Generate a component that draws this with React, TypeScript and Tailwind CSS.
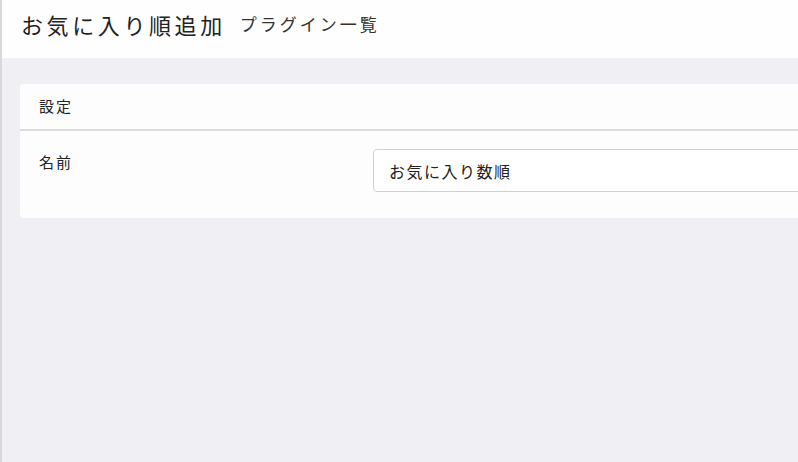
import React from 'react'

const font = { fontFamily: '"Noto Sans CJK JP", "Noto Sans", sans-serif' }

export default function App() {
    return (
        <div className="w-[798px] h-[462px] overflow-hidden bg-[#efeff4] border-l-2 border-[#d8d8dc] flex flex-col" style={font}>
            {/* Page header */}
            <header className="h-[58px] bg-[#fdfefd] flex items-start pt-[9px] pl-[19px] gap-[14px] shrink-0">
                <h1 className="text-[22px] tracking-[3.6px] text-[#222] leading-[30px]">お気に入り順追加</h1>
                <span className="text-[17px] tracking-[3px] text-[#333] leading-[30px]">プラグイン一覧</span>
            </header>

            {/* Settings card */}
            <div className="pl-[18px] pt-[26px]">
                <section className="bg-[#fcfdfc] rounded-l-[4px] w-[800px]">
                    <div className="h-[47px] flex items-center px-[19px] border-b-2 border-[#dcdcdc]">
                        <span className="text-[15px] tracking-[2px] text-[#222]">設定</span>
                    </div>
                    <div className="flex pt-[18px] pb-[26px]">
                        <div className="w-[353px] pl-[19px] pt-[2px] text-[15px] tracking-[2px] text-[#222] shrink-0">名前</div>
                        <input
                            className="flex-1 h-[43px] border border-[#cdd0d6] rounded-[4px] bg-white px-[15px] text-[16px] tracking-[1.5px] text-[#222] outline-none"
                            defaultValue="お気に入り数順"
                            style={font}
                        />
                    </div>
                </section>
            </div>
        </div>
    )
}
